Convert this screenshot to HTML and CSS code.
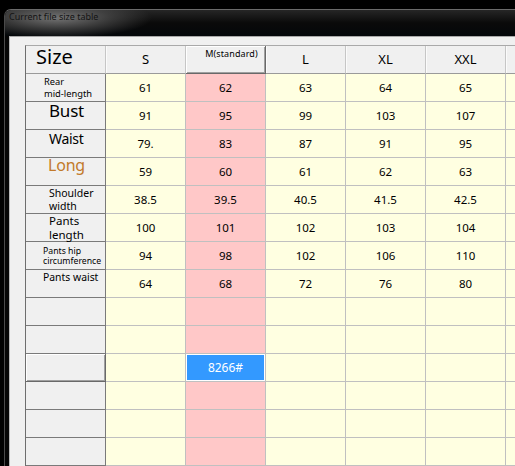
FILE: index.html
```html
<!DOCTYPE html>
<html>
<head>
<meta charset="utf-8">
<link rel="stylesheet" href="styles.css">
</head>
<body>
<div class="window">
  <div class="titlebar"><span class="title">Current file size table</span></div>
  <div class="client">
    <div class="grid">
      <div class="hd size">Size</div>
      <div class="hd">S</div>
      <div class="hd std">M(standard)</div>
      <div class="hd">L</div>
      <div class="hd">XL</div>
      <div class="hd">XXL</div>
      <div class="hd"></div>
      <div class="hd"></div>

      <div class="lbl l-rear"><span>Rear</span><span>mid-length</span></div>
      <div class="c">61</div><div class="c m">62</div><div class="c">63</div><div class="c">64</div><div class="c">65</div><div class="c"></div><div class="c"></div>

      <div class="lbl l-bust">Bust</div>
      <div class="c">91</div><div class="c m">95</div><div class="c">99</div><div class="c">103</div><div class="c">107</div><div class="c"></div><div class="c"></div>

      <div class="lbl l-waist">Waist</div>
      <div class="c">79.</div><div class="c m">83</div><div class="c">87</div><div class="c">91</div><div class="c">95</div><div class="c"></div><div class="c"></div>

      <div class="lbl l-long">Long</div>
      <div class="c">59</div><div class="c m">60</div><div class="c">61</div><div class="c">62</div><div class="c">63</div><div class="c"></div><div class="c"></div>

      <div class="lbl l-shoulder"><span>Shoulder</span><span>width</span></div>
      <div class="c">38.5</div><div class="c m">39.5</div><div class="c">40.5</div><div class="c">41.5</div><div class="c">42.5</div><div class="c"></div><div class="c"></div>

      <div class="lbl l-plen"><span>Pants</span><span>length</span></div>
      <div class="c">100</div><div class="c m">101</div><div class="c">102</div><div class="c">103</div><div class="c">104</div><div class="c"></div><div class="c"></div>

      <div class="lbl l-phip"><span>Pants hip</span><span>circumference</span></div>
      <div class="c">94</div><div class="c m">98</div><div class="c">102</div><div class="c">106</div><div class="c">110</div><div class="c"></div><div class="c"></div>

      <div class="lbl l-pwaist">Pants waist</div>
      <div class="c">64</div><div class="c m">68</div><div class="c">72</div><div class="c">76</div><div class="c">80</div><div class="c"></div><div class="c"></div>

      <div class="lbl"></div>
      <div class="c"></div><div class="c m"></div><div class="c"></div><div class="c"></div><div class="c"></div><div class="c"></div><div class="c"></div>

      <div class="lbl"></div>
      <div class="c"></div><div class="c m"></div><div class="c"></div><div class="c"></div><div class="c"></div><div class="c"></div><div class="c"></div>

      <div class="lbl current"></div>
      <div class="c"></div><div class="c m sel">8266#</div><div class="c"></div><div class="c"></div><div class="c"></div><div class="c"></div><div class="c"></div>

      <div class="lbl"></div>
      <div class="c"></div><div class="c m"></div><div class="c"></div><div class="c"></div><div class="c"></div><div class="c"></div><div class="c"></div>

      <div class="lbl"></div>
      <div class="c"></div><div class="c m"></div><div class="c"></div><div class="c"></div><div class="c"></div><div class="c"></div><div class="c"></div>

      <div class="lbl"></div>
      <div class="c"></div><div class="c m"></div><div class="c"></div><div class="c"></div><div class="c"></div><div class="c"></div><div class="c"></div>
    </div>
  </div>
</div>
</body>
</html>
```

FILE: styles.css
```css
html, body {
  margin: 0;
  padding: 0;
  background: #000;
  overflow: hidden;
  width: 515px;
  height: 466px;
}

body {
  font-family: "Noto Sans", "Open Sans", sans-serif;
}

.window {
  margin: 9px 0 0 4px;
  border-top: 1px solid #6a6a6a;
  border-left: 1px solid #4a4a4a;
  border-top-left-radius: 7px;
  background: #050505;
  height: 457px;
  overflow: hidden;
}

.titlebar {
  height: 26px;
  padding-left: 4px;
  background:
    radial-gradient(ellipse 95px 20px at 52px 8px, rgba(120,120,120,0.95), rgba(85,85,85,0.6) 55%, rgba(40,40,40,0) 100%),
    linear-gradient(#262626, #0a0a0a 50%, #04070a);
}

.title {
  display: block;
  font-size: 9px;
  line-height: 12px;
  padding-top: 1px;
  color: #141414;
}

.client {
  margin-left: 4px;
  border-top: 1px solid #a8a8a8;
  border-left: 1px solid #b8b8b8;
  background: #f0f0f0;
  padding: 8px 0 0 15px;
  height: 440px;
}

.grid {
  display: grid;
  grid-template-columns: repeat(8, 80px);
  grid-auto-rows: 28px;
  border-top: 1px solid #a9a9a9;
  border-left: 1px solid #6e6e6e;
  width: max-content;
}

.grid > div {
  box-sizing: border-box;
}

.hd {
  background: #f0f0f0;
  border-right: 1px solid #c6c6c6;
  border-bottom: 1px solid #9a9a9a;
  box-shadow: inset 1px 0 0 #fbfbfb;
  font-size: 13px;
  line-height: 13px;
  color: #000;
  display: flex;
  align-items: center;
  justify-content: center;
}

.hd.size {
  font-size: 20px;
  line-height: 20px;
  justify-content: flex-start;
  align-items: flex-start;
  padding: 1px 0 0 10px;
  box-shadow: none;
}

.hd.std {
  font-size: 9px;
  line-height: 10px;
  align-items: flex-start;
  padding: 3px 0 0 12px;
  letter-spacing: 0.1px;
  border-right: 1px solid #696969;
  border-bottom: 1px solid #696969;
  box-shadow: inset 1px 1px 0 #fff, inset -1px -1px 0 #a0a0a0;
}

.lbl {
  background: #f0f0f0;
  border-right: 1px solid #7a7a7a;
  border-bottom: 1px solid #7a7a7a;
  color: #000;
  display: flex;
  flex-direction: column;
  justify-content: center;
  padding-left: 23px;
  overflow: visible;
}

.lbl.current {
  border-right: 1px solid #696969;
  border-bottom: 1px solid #696969;
  box-shadow: inset 1px 1px 0 #fff, inset -1px -1px 0 #a0a0a0;
}

.l-rear {
  font-size: 9.3px;
  line-height: 12px;
  padding-left: 18px;
  padding-top: 1px;
}

.l-bust {
  font-size: 17px;
  line-height: 17px;
  justify-content: flex-start;
  letter-spacing: -0.2px;
}

.l-waist {
  font-size: 14px;
  line-height: 14px;
  justify-content: flex-start;
  padding-top: 2px;
  letter-spacing: -0.3px;
}

.l-long {
  font-size: 16px;
  line-height: 14px;
  justify-content: flex-start;
  padding-left: 22px;
  color: #c27a2a;
  letter-spacing: -0.2px;
}

.l-shoulder {
  font-size: 10.5px;
  line-height: 12.6px;
  padding-top: 1px;
}

.l-plen {
  font-size: 11.5px;
  line-height: 13.8px;
  padding-top: 0;
}

.l-phip {
  font-size: 8.7px;
  line-height: 10.5px;
  padding-left: 17px;
  padding-top: 1px;
}

.l-pwaist {
  font-size: 10.4px;
  line-height: 12.5px;
  justify-content: flex-start;
  padding-left: 17px;
  padding-top: 1px;
}

.c {
  background: #ffffe1;
  border-right: 1px solid #c0c0c0;
  border-bottom: 1px solid #c0c0c0;
  font-size: 11.5px;
  color: #000;
  display: flex;
  align-items: center;
  justify-content: center;
}

.c.m {
  background: #ffc8c8;
}

.c.sel {
  background: #3399ff;
  box-shadow: inset 0 0 0 1px #fff;
  color: #fff;
  font-size: 12px;
}
```
